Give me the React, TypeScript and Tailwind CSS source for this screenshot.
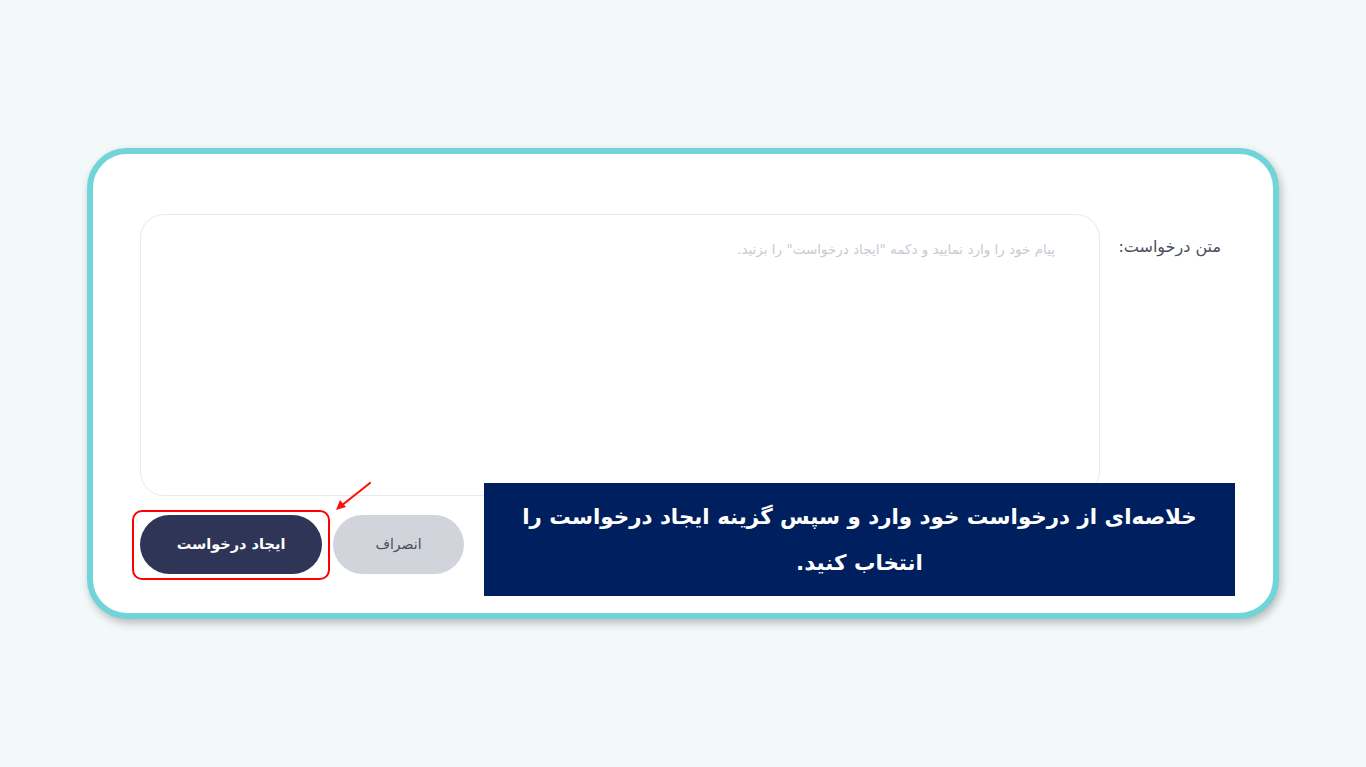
import React from "react";

export default function App() {
  return (
    <div
      className="w-full h-[767px] bg-[#f3f8f8] flex items-center justify-center"
      style={{ fontFamily: '"DejaVu Sans", "Noto Sans", sans-serif' }}
    >
      <div
        dir="rtl"
        className="relative w-[1192px] h-[471px] bg-white border-[6px] border-[#70d4d8] rounded-[40px] shadow-[2px_4px_8px_rgba(0,0,0,0.25)] pt-[60px] pr-[51px] pl-[47px]"
      >
        <div className="flex items-start">
          <div className="w-[122px] shrink-0 pt-[21px] pr-[1px] text-[16px] text-[#4a4d5c]">متن درخواست:</div>
          <div className="w-[960px] h-[282px] border border-[#e8e8ef] rounded-[24px] pt-[24px] pr-[44px]">
            <div className="text-[13.5px] text-[#c9cad3]">پیام خود را وارد نمایید و دکمه "ایجاد درخواست" را بزنید.</div>
          </div>
        </div>
        <div className="flex justify-end gap-[11px] mt-[19px] pl-0">
          <button className="w-[131px] h-[59px] rounded-full bg-[#d2d4dc] text-[14px] text-[#4a4d5c]">انصراف</button>
          <div className="relative">
            <button className="w-[182px] h-[59px] rounded-full bg-[#2e3556] text-[14.5px] font-bold text-white">ایجاد درخواست</button>
            <div className="absolute -left-[8px] -top-[5px] w-[198px] h-[70px] border-2 border-[#ff0000] rounded-[10px] pointer-events-none" />
          </div>
        </div>

        <svg
          className="absolute left-[240px] top-[326px] pointer-events-none"
          width="40"
          height="34"
          viewBox="0 0 40 34"
        >
          <line x1="37" y1="3" x2="8" y2="26" stroke="#ff1010" strokeWidth="2.2" strokeLinecap="round" />
          <polygon points="3,30 7,20 13,27" fill="#ff1010" />
        </svg>

        <div className="absolute left-[391px] top-[329px] w-[751px] h-[113px] bg-[#001f5f] flex items-center justify-center text-center">
          <div className="text-white font-bold text-[21.4px] leading-[46px] px-2 whitespace-nowrap">
            خلاصه‌ای از درخواست خود وارد و سپس گزینه ایجاد درخواست را
            <br />
            انتخاب کنید.
          </div>
        </div>
      </div>
    </div>
  );
}
